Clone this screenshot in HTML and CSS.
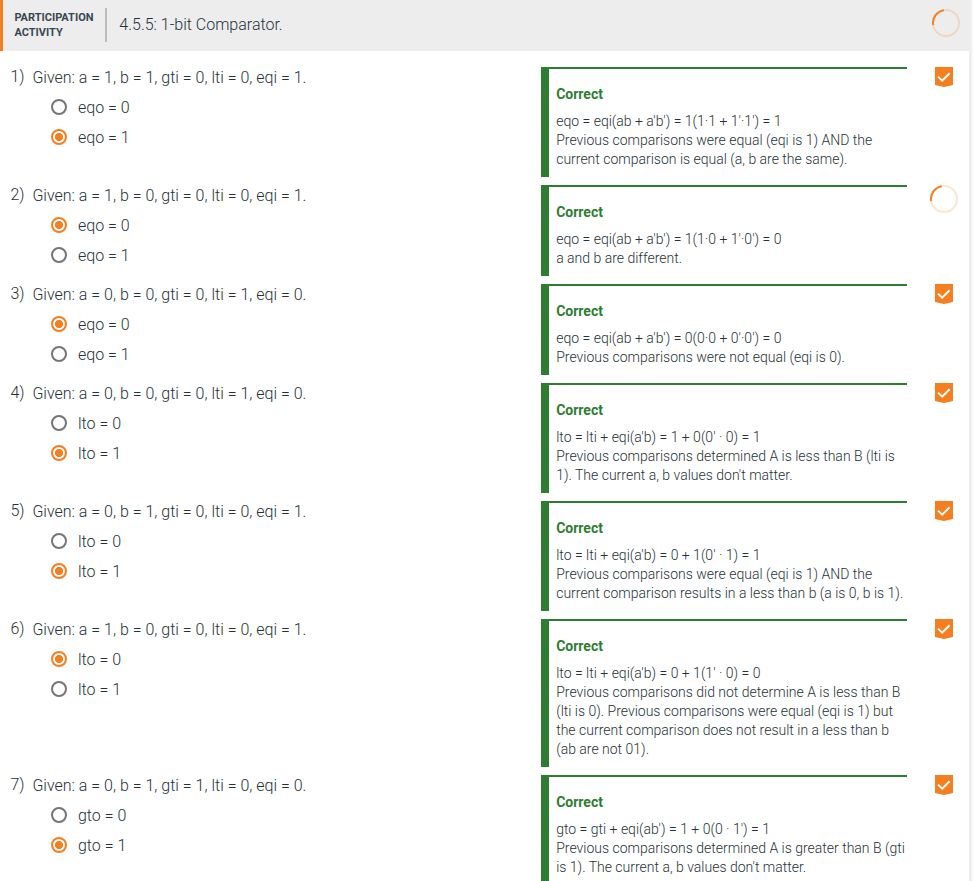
FILE: index.html
```html
<!DOCTYPE html>
<html lang="en">
<head>
<meta charset="utf-8">
<title>4.5.5: 1-bit Comparator</title>
<link rel="stylesheet" href="styles.css">
</head>
<body>
<svg class="defs" width="0" height="0" aria-hidden="true">
  <symbol id="check" viewBox="0 0 18 20"><path class="badge" d="M0 0H18V18L9 20L0 18Z"/><path class="tick" d="M3 9.6L7.2 13.7L14.6 6.3"/></symbol>
  <symbol id="ring" viewBox="0 0 28 28"><circle class="track" cx="14" cy="14" r="13"/><path class="arc" d="M1.15 16A13 13 0 0 1 11.8 1.2"/></symbol>
</svg>
<main class="activity">
  <header class="header">
    <h1 class="kind">PARTICIPATION<br>ACTIVITY</h1>
    <div class="title">4.5.5: 1-bit Comparator.</div>
    <svg class="ring"><use href="#ring"/></svg>
  </header>
  <div class="questions">
    <section class="question">
      <div class="number">1)</div>
      <div class="prompt"><p>Given: a = 1, b = 1, gti = 0, lti = 0, eqi = 1.</p>
        <label><i class="radio"></i>eqo = 0</label><label><i class="radio on"></i>eqo = 1</label></div>
      <div class="answer"><h2>Correct</h2><p>eqo = eqi(ab + a'b') = 1(1·1 + 1'·1') = 1<br>Previous comparisons were equal (eqi is 1) AND the<br>current comparison is equal (a, b are the same).</p></div>
      <svg class="done"><use href="#check"/></svg>
    </section>
    <section class="question">
      <div class="number">2)</div>
      <div class="prompt"><p>Given: a = 1, b = 0, gti = 0, lti = 0, eqi = 1.</p>
        <label><i class="radio on"></i>eqo = 0</label><label><i class="radio"></i>eqo = 1</label></div>
      <div class="answer"><h2>Correct</h2><p>eqo = eqi(ab + a'b') = 1(1·0 + 1'·0') = 0<br>a and b are different.</p></div>
      <svg class="ring"><use href="#ring"/></svg>
    </section>
    <section class="question">
      <div class="number">3)</div>
      <div class="prompt"><p>Given: a = 0, b = 0, gti = 0, lti = 1, eqi = 0.</p>
        <label><i class="radio on"></i>eqo = 0</label><label><i class="radio"></i>eqo = 1</label></div>
      <div class="answer"><h2>Correct</h2><p>eqo = eqi(ab + a'b') = 0(0·0 + 0'·0') = 0<br>Previous comparisons were not equal (eqi is 0).</p></div>
      <svg class="done"><use href="#check"/></svg>
    </section>
    <section class="question">
      <div class="number">4)</div>
      <div class="prompt"><p>Given: a = 0, b = 0, gti = 0, lti = 1, eqi = 0.</p>
        <label><i class="radio"></i>lto = 0</label><label><i class="radio on"></i>lto = 1</label></div>
      <div class="answer"><h2>Correct</h2><p>lto = lti + eqi(a'b) = 1 + 0(0' · 0) = 1<br>Previous comparisons determined A is less than B (lti is<br>1). The current a, b values don't matter.</p></div>
      <svg class="done"><use href="#check"/></svg>
    </section>
    <section class="question">
      <div class="number">5)</div>
      <div class="prompt"><p>Given: a = 0, b = 1, gti = 0, lti = 0, eqi = 1.</p>
        <label><i class="radio"></i>lto = 0</label><label><i class="radio on"></i>lto = 1</label></div>
      <div class="answer"><h2>Correct</h2><p>lto = lti + eqi(a'b) = 0 + 1(0' · 1) = 1<br>Previous comparisons were equal (eqi is 1) AND the<br>current comparison results in a less than b (a is 0, b is 1).</p></div>
      <svg class="done"><use href="#check"/></svg>
    </section>
    <section class="question">
      <div class="number">6)</div>
      <div class="prompt"><p>Given: a = 1, b = 0, gti = 0, lti = 0, eqi = 1.</p>
        <label><i class="radio on"></i>lto = 0</label><label><i class="radio"></i>lto = 1</label></div>
      <div class="answer"><h2>Correct</h2><p>lto = lti + eqi(a'b) = 0 + 1(1' · 0) = 0<br>Previous comparisons did not determine A is less than B<br>(lti is 0). Previous comparisons were equal (eqi is 1) but<br>the current comparison does not result in a less than b<br>(ab are not 01).</p></div>
      <svg class="done"><use href="#check"/></svg>
    </section>
    <section class="question">
      <div class="number">7)</div>
      <div class="prompt"><p>Given: a = 0, b = 1, gti = 1, lti = 0, eqi = 0.</p>
        <label><i class="radio"></i>gto = 0</label><label><i class="radio on"></i>gto = 1</label></div>
      <div class="answer"><h2>Correct</h2><p>gto = gti + eqi(ab') = 1 + 0(0 · 1') = 1<br>Previous comparisons determined A is greater than B (gti<br>is 1). The current a, b values don't matter.</p></div>
      <svg class="done"><use href="#check"/></svg>
    </section>
  </div>
</main>
</body>
</html>
```
FILE: styles.css
```css
* { box-sizing: border-box; }
body {
  margin: 0;
  height: 881px;
  overflow: hidden;
  background: #fff;
  color: #263238;
  font: 300 16px/20px Roboto, sans-serif;
}
.defs { display: block; height: 0; }
h1, h2, p { margin: 0; }
.activity { width: 971px; box-shadow: 0 0 3px #ddd; border-right: 2px solid #ededed; }
.header {
  display: flex;
  width: 971px;
  height: 51px;
  background: #ededed;
  border-left: 3px solid #f57f20;
}
.kind {
  width: 104px;
  height: 34px;
  margin-top: 8px;
  padding: 2px 0 0 11.4px;
  border-right: 2px solid #bdbdbd;
  color: #37474f;
  font-size: 11px;
  font-weight: 700;
  line-height: 15px;
}
.title { flex: 1; padding: 15px 0 0 12.3px; }
.header .ring { margin: 9px 11px 0 0; }
.questions { display: flex; flex-direction: column; gap: 8px; padding: 16px 0 8px 10.4px; }
.question { display: grid; grid-template-columns: 22px 508.6px 366px 62px; align-items: start; }
.prompt { padding-top: 1px; }
.prompt label { display: flex; align-items: center; height: 20px; margin: 10px 0 0 18.6px; }
.radio {
  width: 16px;
  height: 16px;
  margin: -2px 11px 0 0;
  border: 2px solid #757575;
  border-radius: 50%;
}
.radio.on { border-color: #f57f20; background: radial-gradient(circle, #f57f20 3.7px, transparent 4.4px); }
.answer {
  padding: 16px 0 8px 15.2px;
  border-top: 2px solid #2e7d32;
  font-size: 14px;
  line-height: 19px;
  box-shadow: inset 8px 0 #2e7d32;
  white-space: nowrap;
}
.answer h2 { margin-bottom: 8px; color: #2e7d32; font-size: 14px; font-weight: 700; line-height: 19px; }
.done { width: 18px; height: 20px; margin-left: 28px; }
.ring { width: 28px; height: 28px; }
.question .ring { margin-left: 23px; }
.badge { fill: #f57f20; }
.tick { fill: none; stroke: #fff; stroke-width: 2; }
.track { fill: none; stroke: #f57f20; stroke-opacity: .2; stroke-width: 2; }
.arc { fill: none; stroke: #f57f20; stroke-width: 2; }
```
